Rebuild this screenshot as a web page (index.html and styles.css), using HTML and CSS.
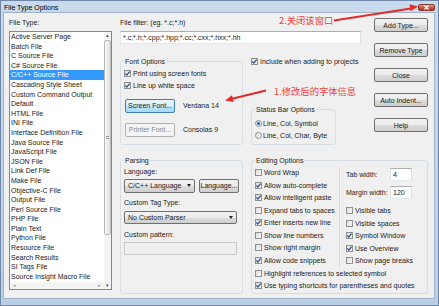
FILE: index.html
```html
<!DOCTYPE html>
<html lang="en">
  <head>
    <meta charset="UTF-8" />
    <meta name="viewport" content="width=device-width, initial-scale=1.0" />
    <title>File Type Options</title>
    <link rel="stylesheet" href="styles.css">
  </head>
  <body>
    <div class="window">
      <div class="titlebar">
        <span class="title">File Type Options</span>
        <span class="close-btn">
          <svg viewBox="0 0 17 7" width="17" height="7"><path d="M6.5 1.5 10.5 5.5M10.5 1.5 6.5 5.5" /></svg>
        </span>
      </div>

      <div class="client">
        <!-- file type list -->
        <div class="types">
          <div class="label">File Type:</div>
          <div class="listbox">
            <div class="list-col">
              <ul class="items">
                <li>Active Server Page</li>
                <li>Batch File</li>
                <li>C Source File</li>
                <li>C# Source File</li>
                <li class="sel">C/C++ Source File</li>
                <li>Cascading Style Sheet</li>
                <li>Custom Command Output</li>
                <li>Default</li>
                <li>HTML File</li>
                <li>INI File</li>
                <li>Interface Definition File</li>
                <li>Java Source File</li>
                <li>JavaScript File</li>
                <li>JSON File</li>
                <li>Link Def File</li>
                <li>Make File</li>
                <li>Objective-C File</li>
                <li>Output File</li>
                <li>Perl Source File</li>
                <li>PHP File</li>
                <li>Plain Text</li>
                <li>Python File</li>
                <li>Resource File</li>
                <li>Search Results</li>
                <li>SI Tags File</li>
                <li>Source Insight Macro File</li>
              </ul>
              <div class="hscroll"><span>&#9666;</span><span>&#9656;</span></div>
            </div>
            <div class="vscroll">
              <div class="sb-arrow">&#9652;</div>
              <div class="thumb"><span class="grip"></span></div>
              <div class="track"></div>
              <div class="sb-arrow">&#9662;</div>
            </div>
          </div>
        </div>

        <div class="main">
          <div class="top">
            <div class="top-left">
              <div class="label">File filter: (eg. *.c;*.h)</div>
              <div class="textbox filter">*.c;*.h;*.cpp;*.hpp;*.cc;*.cxx;*.hxx;*.hh</div>

              <div class="top-row">
                <fieldset class="group font-group">
                  <legend>Font Options</legend>
                  <div class="check"><span class="cb"><svg viewBox="0 0 7 7"><path d="M1.4 3.5 2.9 5.1 5.6 1.6" /></svg></span>Print using screen fonts</div>
                  <div class="check"><span class="cb"><svg viewBox="0 0 7 7"><path d="M1.4 3.5 2.9 5.1 5.6 1.6" /></svg></span>Line up white space</div>
                  <div class="font-row">
                    <span class="btn focus">Screen Font...</span>
                    <span>Verdana 14</span>
                  </div>
                  <div class="font-row second">
                    <span class="btn disabled">Printer Font...</span>
                    <span>Consolas 9</span>
                  </div>
                </fieldset>

                <div class="side">
                  <div class="check"><span class="cb"><svg viewBox="0 0 7 7"><path d="M1.4 3.5 2.9 5.1 5.6 1.6" /></svg></span>Include when adding to projects</div>
                  <fieldset class="group status-group">
                    <legend>Status Bar Options</legend>
                    <div class="radio-row"><span class="rb on"></span>Line, Col, Symbol</div>
                    <div class="radio-row"><span class="rb"></span>Line, Col, Char, Byte</div>
                  </fieldset>
                </div>
              </div>
            </div>

            <div class="buttons">
              <span class="btn">Add Type...</span>
              <span class="btn">Remove Type</span>
              <span class="btn">Close</span>
              <span class="btn">Auto Indent...</span>
              <span class="btn">Help</span>
            </div>
          </div>

          <div class="bottom">
            <fieldset class="group parsing">
              <legend>Parsing</legend>
              <div class="label">Language:</div>
              <div class="combo-row">
                <span class="combo lang">C/C++ Language<i class="caret"></i></span>
                <span class="btn lang-btn">Language...</span>
              </div>
              <div class="label gap">Custom Tag Type:</div>
              <span class="combo wide">No Custom Parser<i class="caret"></i></span>
              <div class="label gap">Custom pattern:</div>
              <div class="textbox pattern"></div>
            </fieldset>

            <fieldset class="group editing">
              <legend>Editing Options</legend>
              <div class="edit-cols">
                <div class="edit-left">
                  <div class="check"><span class="cb"></span>Word Wrap</div>
                  <div class="check"><span class="cb"><svg viewBox="0 0 7 7"><path d="M1.4 3.5 2.9 5.1 5.6 1.6" /></svg></span>Allow auto-complete</div>
                  <div class="check"><span class="cb"><svg viewBox="0 0 7 7"><path d="M1.4 3.5 2.9 5.1 5.6 1.6" /></svg></span>Allow intelligent paste</div>
                  <div class="check"><span class="cb"></span>Expand tabs to spaces</div>
                  <div class="check"><span class="cb"><svg viewBox="0 0 7 7"><path d="M1.4 3.5 2.9 5.1 5.6 1.6" /></svg></span>Enter inserts new line</div>
                  <div class="check"><span class="cb"></span>Show line numbers</div>
                  <div class="check"><span class="cb"></span>Show right margin</div>
                  <div class="check"><span class="cb"><svg viewBox="0 0 7 7"><path d="M1.4 3.5 2.9 5.1 5.6 1.6" /></svg></span>Allow code snippets</div>
                </div>
                <div class="edit-right">
                  <div class="num-row"><span class="num-label">Tab width:</span><span class="textbox num">4</span></div>
                  <div class="num-row"><span class="num-label">Margin width:</span><span class="textbox num">120</span></div>
                  <div class="right-checks">
                    <div class="check"><span class="cb"></span>Visible tabs</div>
                    <div class="check"><span class="cb"></span>Visible spaces</div>
                    <div class="check"><span class="cb"><svg viewBox="0 0 7 7"><path d="M1.4 3.5 2.9 5.1 5.6 1.6" /></svg></span>Symbol Window</div>
                    <div class="check"><span class="cb"><svg viewBox="0 0 7 7"><path d="M1.4 3.5 2.9 5.1 5.6 1.6" /></svg></span>Use Overview</div>
                    <div class="check"><span class="cb"></span>Show page breaks</div>
                  </div>
                </div>
              </div>
              <div class="check"><span class="cb"></span>Highlight references to selected symbol</div>
              <div class="check"><span class="cb"><svg viewBox="0 0 7 7"><path d="M1.4 3.5 2.9 5.1 5.6 1.6" /></svg></span>Use typing shortcuts for parentheses and quotes</div>
            </fieldset>
          </div>
        </div>
      </div>

      <!-- red annotations drawn over the dialog -->
      <div class="note note-close">2.关闭该窗口</div>
      <div class="note note-font">1.修改后的字体信息</div>
      <svg class="arrows" width="439" height="306" viewBox="0 0 439 306">
        <line x1="334" y1="20.5" x2="411" y2="8.4" />
        <polygon points="418,6.5 410.6,11.2 409.6,4.2" />
        <line x1="266" y1="90.5" x2="232" y2="98.8" />
        <polygon points="225,100.5 233.6,102 232,95.2" />
      </svg>
    </div>
  </body>
</html>
```

FILE: styles.css
```css
* {
  box-sizing: border-box;
}

body {
  margin: 0;
  font: 7px/9px "Liberation Sans", Arial, sans-serif;
  color: #1a1a1a;
}

/* window frame */
.window {
  position: relative;
  width: 439px;
  height: 306px;
  padding: 0 4px 0 3px;
  border: 1px solid #6f88aa;
  background: linear-gradient(#cadaed, #bdcfe5);
  overflow: hidden;
}

.titlebar {
  height: 12px;
  display: flex;
  align-items: center;
}

.title {
  color: #000;
}

.close-btn {
  margin-left: auto;
  margin-right: -1px;
  width: 17px;
  height: 7px;
  border: 1px solid #8a3a30;
  border-radius: 2px;
  background: linear-gradient(#e0a295, #c9503c 55%, #b8321f);
  display: flex;
}

.close-btn svg {
  stroke: #fff;
  stroke-width: 1.4;
  margin: -1px;
}

.client {
  display: flex;
  gap: 8px;
  height: 285px;
  padding: 5px 6px 0 5px;
  background: #f0f0f0;
  box-shadow: 0 0 0 1px #9fb3cb;
}

.label {
  height: 9px;
  white-space: nowrap;
}

/* list of file types */
.types {
  width: 103px;
}

.listbox {
  margin-top: 4px;
  height: 259px;
  display: flex;
  border: 1px solid #828790;
  background: #fff;
}

.list-col {
  flex: 1;
  display: flex;
  flex-direction: column;
}

.items {
  list-style: none;
  margin: 0;
  padding: 0;
  height: 250px;
}

.items li {
  height: 9.6px;
  line-height: 9.6px;
  padding-left: 1px;
  white-space: nowrap;
}

.items li.sel {
  background: #3399ff;
  color: #fff;
}

.hscroll {
  height: 7px;
  display: flex;
  justify-content: space-between;
  align-items: center;
  padding: 0 3px;
  background: #f4f4f4;
  color: #9a9a9a;
  font-size: 5px;
}

.vscroll {
  width: 7px;
  display: flex;
  flex-direction: column;
  background: #f5f5f5;
}

.sb-arrow {
  height: 7px;
  line-height: 7px;
  text-align: center;
  font-size: 5px;
  color: #4a4a4a;
}

.thumb {
  height: 195px;
  margin: 1px 0 0;
  border: 1px solid #b9b9b9;
  border-radius: 2px;
  background: linear-gradient(90deg, #f6f6f6, #e2e2e2);
  display: flex;
  align-items: center;
  justify-content: center;
}

.grip {
  width: 3px;
  height: 3px;
  border-top: 1px solid #9a9a9a;
  border-bottom: 1px solid #9a9a9a;
}

.track {
  flex: 1;
}

/* right side */
.main {
  width: 308px;
}

.top {
  display: flex;
  gap: 13px;
}

.top-left {
  width: 241px;
}

.textbox {
  display: block;
  height: 13px;
  line-height: 11px;
  padding: 0 2px;
  border: 1px solid #abadb3;
  border-color: #abadb3 #dbdfe6 #e3e9ef #e2e3ea;
  background: #fff;
  white-space: nowrap;
  overflow: hidden;
}

.filter {
  margin-top: 4px;
}

.top-row {
  display: flex;
  gap: 8px;
  margin-top: 10.8px;
}

/* group boxes */
.group {
  margin: 0;
  padding: 0 3px;
  min-width: 0;
  border: 1px solid #d5dfe5;
  border-radius: 3px;
}

.group legend {
  padding: 0 1px;
  height: 9px;
  line-height: 9px;
}

.font-group {
  width: 123px;
  margin-top: 2.7px;
  padding-top: 0.3px;
  padding-bottom: 7px;
}

.check {
  display: flex;
  align-items: center;
  gap: 2px;
  height: 12.45px;
  white-space: nowrap;
}

.cb {
  flex: none;
  width: 7px;
  height: 7px;
  border: 1px solid #8e8f8f;
  background: linear-gradient(135deg, #dcdcdc, #fbfbfb);
  position: relative;
}

.cb svg {
  position: absolute;
  left: -1px;
  top: -1px;
  width: 7px;
  height: 7px;
  fill: none;
  stroke: #2f4f94;
  stroke-width: 1.2;
}

.font-row {
  display: flex;
  align-items: center;
  gap: 8px;
  margin-top: 7.3px;
}

.font-row.second {
  margin-top: 10px;
}

.side {
  width: 110px;
}

.status-group {
  width: 85px;
  margin-top: 38.25px;
  padding-top: 3.3px;
  padding-bottom: 2.2px;
}

.radio-row {
  display: flex;
  align-items: center;
  gap: 1px;
  height: 12px;
  white-space: nowrap;
}

.rb {
  width: 7px;
  height: 7px;
  border: 1px solid #8e8f8f;
  border-radius: 50%;
  background: linear-gradient(135deg, #d8d8d8, #fcfcfc);
  display: flex;
  align-items: center;
  justify-content: center;
}

.rb.on::after {
  content: "";
  width: 3px;
  height: 3px;
  border-radius: 50%;
  background: #1f5fb5;
}

/* push buttons */
.buttons {
  width: 54px;
  display: flex;
  flex-direction: column;
  gap: 11px;
}

.btn {
  display: flex;
  align-items: center;
  justify-content: center;
  height: 14px;
  border: 1px solid #707070;
  border-radius: 2px;
  background: linear-gradient(#f2f2f2, #ebebeb 50%, #dddddd 51%, #cfcfcf);
  white-space: nowrap;
}

.font-row .btn {
  width: 50px;
  margin-left: 1px;
}

.btn.focus {
  border-color: #3c7fb1;
  background: linear-gradient(#eaf6fd, #d9f0fc 50%, #bee6fd 51%, #a7d9f5);
}

.btn.disabled {
  border-color: #adb2b5;
  background: #f4f4f4;
  color: #8a8a8a;
}

.bottom {
  display: flex;
  gap: 8px;
  margin-top: 11.5px;
  height: 137.5px;
}

.parsing {
  width: 123px;
  padding-top: 2px;
}

.combo-row {
  display: flex;
  gap: 4px;
  margin-top: 2.5px;
}

.combo {
  display: flex;
  align-items: center;
  height: 14px;
  padding: 0 3px;
  border: 1px solid #707070;
  border-radius: 2px;
  background: linear-gradient(#f2f2f2, #ebebeb 50%, #dddddd 51%, #cfcfcf);
  white-space: nowrap;
}

.caret {
  margin-left: auto;
  border-left: 2px solid transparent;
  border-right: 2px solid transparent;
  border-top: 3px solid #222;
}

.combo.lang {
  width: 71px;
}

.lang-btn {
  width: 40px;
}

.combo.wide {
  width: 113px;
  height: 13px;
  margin-top: 4px;
}

.label.gap {
  margin-top: 5.5px;
}

.pattern {
  width: 113px;
  margin-top: 3.5px;
  background: #f0f0f0;
  border-color: #c9c9c9;
}

.editing {
  width: 177px;
  padding-top: 1.3px;
}

.edit-cols {
  display: flex;
}

.edit-left {
  width: 85px;
  border-right: 1px solid #dcdcdc;
}

.edit-right {
  margin-left: 6px;
  padding-top: 1.2px;
}

.num-row {
  display: flex;
  align-items: center;
  height: 13px;
}

.num-row + .num-row {
  margin-top: 5px;
}

.num-label {
  width: 44px;
  white-space: nowrap;
}

.textbox.num {
  width: 22px;
}

.right-checks {
  margin-top: 5.8px;
}

/* annotations */
.note {
  position: absolute;
  color: #ef3d3d;
  font: 9.3px/11px "Noto Sans CJK SC", sans-serif;
  white-space: nowrap;
}

.note-close {
  left: 278px;
  top: 13.5px;
}

.note-font {
  left: 273px;
  top: 84.5px;
}

.arrows {
  position: absolute;
  left: -1px;
  top: -1px;
  pointer-events: none;
}

.arrows line {
  stroke: #e52a2a;
  stroke-width: 2;
}

.arrows polygon {
  fill: #e52a2a;
}
```
